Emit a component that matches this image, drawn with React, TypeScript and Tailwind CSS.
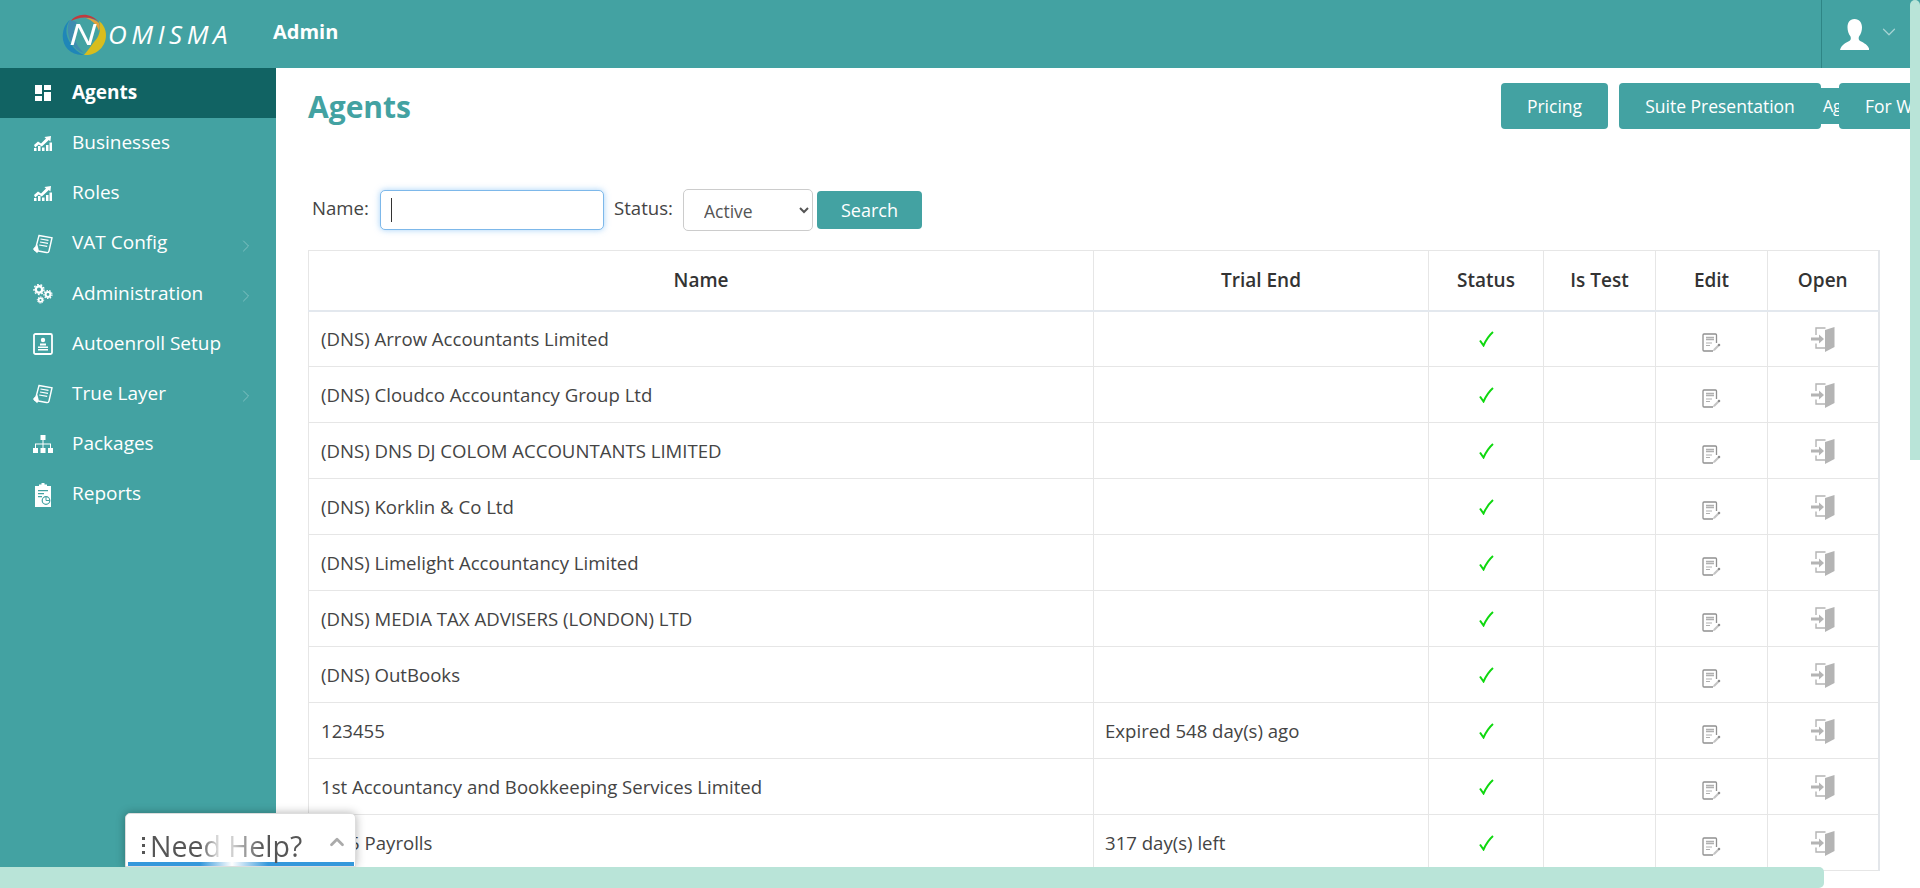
import { ChevronDown, ChevronRight, ChevronUp } from "lucide-react";

const Dashboard = () => (
    <svg width="16" height="16" viewBox="0 0 16 16" fill="#fff">
        <rect x="0" y="0" width="7" height="9" />
        <rect x="9" y="0" width="7" height="5" />
        <rect x="0" y="11" width="7" height="5" />
        <rect x="9" y="7" width="7" height="9" />
    </svg>
);

const Growth = () => (
    <svg width="20" height="16" viewBox="0 0 20 16" fill="#fff">
        <path d="M1 10l4-3.500 3 2 5-5-1.600-1.600L18 1l-.6 5.600-1.600-1.600-7 6.500-3-2-3.600 3z" />
        <rect x="1" y="13" width="2.500" height="3" />
        <rect x="5" y="11" width="2.500" height="5" />
        <rect x="9" y="12.500" width="2.500" height="3.500" />
        <rect x="13" y="10" width="2.500" height="6" />
        <rect x="16.500" y="7.500" width="2.500" height="8.500" />
    </svg>
);

const Ledger = () => (
    <svg width="20" height="20" viewBox="0 0 20 20" fill="none" stroke="#fff" strokeWidth="1.400">
        <path d="M6 1.500l13 2.200L16 17c-.3 1.300-1.200 1.800-2.500 1.500L2.500 16.500c-1-.3-1.500-1-1-2l1.500-1.500z" />
        <path d="M7.500 5l8 1.400M7 8l8 1.400M6.200 11l8 1.400" strokeWidth="1.200" />
        <path d="M1 15l3-3 1 4-1 2z" fill="#fff" />
    </svg>
);

const Gears = () => (
    <svg width="20" height="20" viewBox="0 0 20 20" fill="none" stroke="#fff">
        <circle cx="6" cy="5.500" r="3.200" strokeWidth="2.400" />
        <circle cx="6" cy="5.500" r="5" strokeWidth="1.400" strokeDasharray="1.800 1.700" />
        <circle cx="15" cy="10.500" r="2.400" strokeWidth="2" />
        <circle cx="15" cy="10.500" r="4" strokeWidth="1.200" strokeDasharray="1.500 1.300" />
        <circle cx="7.500" cy="16" r="1.900" strokeWidth="1.800" />
        <circle cx="7.500" cy="16" r="3.200" strokeWidth="1" strokeDasharray="1.300 1.100" />
    </svg>
);

const Enroll = () => (
    <svg width="20" height="22" viewBox="0 0 20 22" fill="none">
        <rect x="1" y="1" width="18" height="20" rx="1.500" stroke="#fff" strokeWidth="1.800" />
        <circle cx="10" cy="7" r="2.200" fill="#fff" />
        <path d="M7 10.500h6v2H7zM5 13.500h10v1.500H5zM5 16h10v1.500H5z" fill="#fff" />
    </svg>
);

const Sitemap = () => (
    <svg width="20" height="20" viewBox="0 0 20 20" fill="#fff">
        <rect x="7.500" y="1" width="5" height="5" />
        <rect x="0" y="14" width="5" height="5" />
        <rect x="7.500" y="14" width="5" height="5" />
        <rect x="15" y="14" width="5" height="5" />
        <path d="M9.500 6h1v3.500h7.500V14h-1v-3.500h-6.500V14h-1v-3.500H3V14H2V9.500h7.500z" />
    </svg>
);

const Clipboard = () => (
    <svg width="18" height="24" viewBox="0 0 18 24" fill="#fff">
        <path d="M1 3h4V1.500h2.500V0h3v1.500H13V3h4v21H1z" />
        <path d="M4 7h10v1.200H4zM4 10h6v1.200H4zM4 13h4v1.200H4z" fill="#43a2a2" />
        <circle cx="12" cy="17.500" r="3.800" fill="none" stroke="#43a2a2" strokeWidth="1.200" />
        <path d="M12 17.500h3.800M12 17.500v-3.800" stroke="#43a2a2" strokeWidth="1" />
    </svg>
);

const Logo = () => (
    <div className="flex items-center text-white italic font-['Open_Sans',sans-serif]">
        <div className="relative w-[44px] h-[44px]">
            <svg width="44" height="44" viewBox="0 0 44 44" fill="none">
                <path d="M8 10C13 2 27-1 37 10 30 4 16 4 8 10z" fill="#c23a3e" />
                <path d="M22 43C8 44-1 33 1 21 2 14 5 10 8 8 3 15 3 24 9 32c3 5 8 9 13 11z" fill="#1f86b8" />
                <path d="M8 8c-3 6-3 14 1 22 3 5 7 9 13 11-8-7-14-20-7-31z" fill="#3f8cb0" />
                <path d="M22 43c12 1 22-8 22-20 0-6-3-11-7-14 3 10-1 17-5 21-3 4-6 8-10 13z" fill="#d8bd1e" />
                <path d="M24 6c5 0 10 2 13 5 1 3 1 5 0 8-2-6-7-11-13-13z" fill="#e2a13a" />
            </svg>
            <span className="absolute left-[7px] top-[0px] origin-left scale-x-[1.3] text-[30px] leading-[44px] font-normal">N</span>
        </div>
        <span className="ml-[2px] text-[26px] leading-none tracking-[4.500px] font-normal">OMISMA</span>
    </div>
);

const menu = [
    { label: "Agents", icon: <Dashboard />, active: true },
    { label: "Businesses", icon: <Growth /> },
    { label: "Roles", icon: <Growth /> },
    { label: "VAT Config", icon: <Ledger />, sub: true },
    { label: "Administration", icon: <Gears />, sub: true },
    { label: "Autoenroll Setup", icon: <Enroll /> },
    { label: "True Layer", icon: <Ledger />, sub: true },
    { label: "Packages", icon: <Sitemap /> },
    { label: "Reports", icon: <Clipboard /> },
];

const rows = [
    { name: "(DNS) Arrow Accountants Limited", trial: "" },
    { name: "(DNS) Cloudco Accountancy Group Ltd", trial: "" },
    { name: "(DNS) DNS DJ COLOM ACCOUNTANTS LIMITED", trial: "" },
    { name: "(DNS) Korklin & Co Ltd", trial: "" },
    { name: "(DNS) Limelight Accountancy Limited", trial: "" },
    { name: "(DNS) MEDIA TAX ADVISERS (LONDON) LTD", trial: "" },
    { name: "(DNS) OutBooks", trial: "" },
    { name: "123455", trial: "Expired 548 day(s) ago" },
    { name: "1st Accountancy and Bookkeeping Services Limited", trial: "" },
    { name: "24/5 Payrolls", trial: "317 day(s) left" },
];

const Check = () => (
    <svg className="inline-block mb-[4px]" width="15" height="16" viewBox="0 0 15 16" fill="none">
        <path d="M1 9.500l3.500 5C7 9 10 4.500 14 1" stroke="#10d810" strokeWidth="2" />
    </svg>
);

const EditIcon = () => (
    <svg className="inline-block mt-[3px]" width="19" height="19" viewBox="0 0 19 19" fill="none">
        <path d="M14.500 10V2c0-.6-.4-1-1-1H2c-.6 0-1 .4-1 1v15c0 .6.4 1 1 1h9" stroke="#909090" strokeWidth="1.300" />
        <path d="M4 4.500h8M4 6.500h8" stroke="#b0b0b0" strokeWidth="1.600" />
        <path d="M4 10h6M4 12.500h4" stroke="#b0b0b0" strokeWidth="1.100" />
        <path d="M11.500 16l4-4 1.500 1.500-4 4-2 .5z" fill="#c4c4c4" />
        <path d="M15.500 12l1.500-1.500 1.500 1.500-1.500 1.500z" fill="#808080" />
    </svg>
);

const DoorIcon = () => (
    <svg className="inline-block mb-[1px]" width="24" height="25" viewBox="0 0 24 25" fill="none">
        <path d="M14.500 1H5v7M5 16.500V21h9" stroke="#b4b4b4" strokeWidth="1.400" />
        <path d="M14 3l9.500-3v20l-9.500 5z" fill="#b4b4b4" />
        <path d="M0 10.500h8V7.500l5 4.500-5 4.500v-3H0z" fill="#b4b4b4" />
    </svg>
);

export default function App() {
    return (
        <div className="relative h-[888px] w-full overflow-hidden bg-white font-['Open_Sans',sans-serif] text-[#444]">
            {/* Top bar */}
            <header className="flex h-[68px] items-center bg-[#43a2a2] text-white">
                <div className="w-[273px] pl-[62px]">
                    <Logo />
                </div>
                <span className="text-[20px] font-bold -mt-[5px]">Admin</span>
                <div className="ml-auto flex h-full w-[99px] items-center border-l border-[#2e8585] pl-[18px]">
                    <svg width="29" height="31" viewBox="0 0 29 31" fill="#fff">
                        <path d="M14.500 0c5 0 7.500 4 7.500 8.500 0 3-1 6.500-3 9-.5 1.500-.5 3 .5 4 3 2 8.500 3.500 10 9.500H0c1.500-6 7-7.500 10-9.500 1-1 1-2.500.5-4-2-2.500-3-6-3-9C7.500 4 9.500 0 14.500 0z" />
                    </svg>
                    <ChevronDown className="ml-[9px] -mt-[4px] text-[#a8d4d4]" size={22} strokeWidth={1.300} />
                </div>
            </header>

            <div className="flex h-[820px]">
                {/* Sidebar */}
                <aside className="h-full w-[276px] shrink-0 bg-[#43a2a2] text-white">
                    {menu.map((item) => (
                        <div
                            key={item.label}
                            className={`flex h-[50.200px] items-center text-[19px] ${item.active ? "bg-[#116363] font-bold" : ""}`}
                        >
                            <div className="ml-[32px] mr-[19px] flex w-[21px] justify-center">{item.icon}</div>
                            <span className="-mt-[2px]">{item.label}</span>
                            {item.sub && <ChevronRight className="ml-auto mr-[20px] mt-[4px] text-[#8cc8c8]" size={20} strokeWidth={1} />}
                        </div>
                    ))}
                </aside>

                {/* Content */}
                <main className="min-w-0 flex-1 overflow-hidden pl-[32px]">
                    <div className="flex h-[122px] items-start pt-[15px]">
                        <h1 className="w-[1193px] shrink-0 pt-[1px] text-[30px] font-bold text-[#43a2a2]">Agents</h1>
                        <button className="h-[46px] w-[107px] shrink-0 rounded-[4px] bg-[#43a2a2] text-[17.500px] text-white">Pricing</button>
                        <button className="ml-[11px] h-[46px] w-[202px] shrink-0 rounded-[4px] bg-[#43a2a2] text-[17.500px] text-white">Suite Presentation</button>
                        <div className="mt-[5px] h-[36px] w-[18px] shrink-0 overflow-hidden bg-[#43a2a2] pl-[2px] text-[16px] leading-[36px] text-white">Agents</div>
                        <button className="h-[46px] w-[132px] shrink-0 rounded-[4px] bg-[#43a2a2] pl-[26px] text-left text-[17.500px] text-white whitespace-nowrap">For Websites</button>
                    </div>

                    <div className="flex h-[60px] items-start text-[18.600px]">
                        <label className="mt-[4px] ml-[4px] w-[58px]">Name:</label>
                        <div className="ml-[10px] flex h-[40px] w-[224px] shrink-0 items-center rounded-[5px] border border-[#7db8ea] bg-white pl-[10px] shadow-[0_0_6px_rgba(90,170,240,0.55)]">
                            <span className="h-[24px] w-[1px] bg-[#333]" />
                        </div>
                        <label className="mt-[4px] ml-[10px] w-[60px]">Status:</label>
                        <select className="-mt-[1px] ml-[9px] h-[42px] w-[130px] shrink-0 rounded-[5px] border border-[#ccc] bg-white pl-[16px] pt-[1px] text-[17.500px] text-[#555]">
                            <option>Active</option>
                        </select>
                        <button className="mt-[1px] ml-[4px] h-[38px] w-[105px] shrink-0 rounded-[4px] bg-[#43a2a2] pt-[1px] text-[18px] text-white">Search</button>
                    </div>

                    <table className="w-[1570px] table-fixed border-collapse border-r-2 border-r-[#e3e6ea] text-[18.600px]">
                        <colgroup>
                            <col className="w-[785px]" />
                            <col className="w-[335px]" />
                            <col className="w-[115px]" />
                            <col className="w-[112px]" />
                            <col className="w-[112px]" />
                            <col className="w-[111px]" />
                        </colgroup>
                        <thead>
                            <tr className="h-[60px] border-b-2 border-[#e3e8ee] text-[19px] text-[#333]">
                                {["Name", "Trial End", "Status", "Is Test", "Edit", "Open"].map((h) => (
                                    <th key={h} className="border border-[#e6e6e6] border-b-[#e3e8ee] font-semibold">{h}</th>
                                ))}
                            </tr>
                        </thead>
                        <tbody>
                            {rows.map((row) => (
                                <tr key={row.name} className="h-[56px]">
                                    <td className="border border-[#e6e6e6] px-[12px]">{row.name}</td>
                                    <td className="border border-[#e6e6e6] px-[11px]">{row.trial}</td>
                                    <td className="border border-[#e6e6e6] text-center"><Check /></td>
                                    <td className="border border-[#e6e6e6]"></td>
                                    <td className="border border-[#e6e6e6] text-center"><EditIcon /></td>
                                    <td className="border border-[#e6e6e6] text-center"><DoorIcon /></td>
                                </tr>
                            ))}
                        </tbody>
                    </table>
                </main>
            </div>

            {/* Help widget */}
            <div className="absolute left-[125px] top-[813px] h-[54px] w-[231px] rounded-t-[5px] border border-[#ddd] bg-white pl-[2px] pr-[1px] shadow-[0_0_10px_rgba(0,0,0,0.3)]">
                <div className="flex h-[48px] items-center pl-[14px] pt-[15px]">
                    <div className="mr-[5px] flex flex-col gap-[4px]">
                        <span className="h-[3px] w-[3px] bg-[#555]" />
                        <span className="h-[3px] w-[3px] bg-[#555]" />
                        <span className="h-[3px] w-[3px] bg-[#555]" />
                    </div>
                    <span className="bg-[linear-gradient(90deg,#555_0%,#555_33%,#ddd_45%,#ddd_52%,#888_66%,#555_75%)] bg-clip-text text-[28.500px] leading-[34px] text-transparent">Need Help?</span>
                    <ChevronUp className="ml-auto mr-[6px] -mt-[8px] text-[#aaa]" size={22} strokeWidth={3} />
                </div>
                <div className="h-[4px] bg-[linear-gradient(90deg,#3498db_0%,#3498db_32%,#ffffff_46%,#3498db_62%,#3498db_100%)]" />
            </div>

            {/* Custom scrollbars */}
            <div className="absolute right-0 top-0 h-[460px] w-[10px] rounded-t-[5px] bg-[#b9e4d8]" />
            <div className="absolute bottom-0 left-0 h-[21px] w-[1824px] rounded-r-[5px] bg-[#b9e4d8]" />
        </div>
    );
}
